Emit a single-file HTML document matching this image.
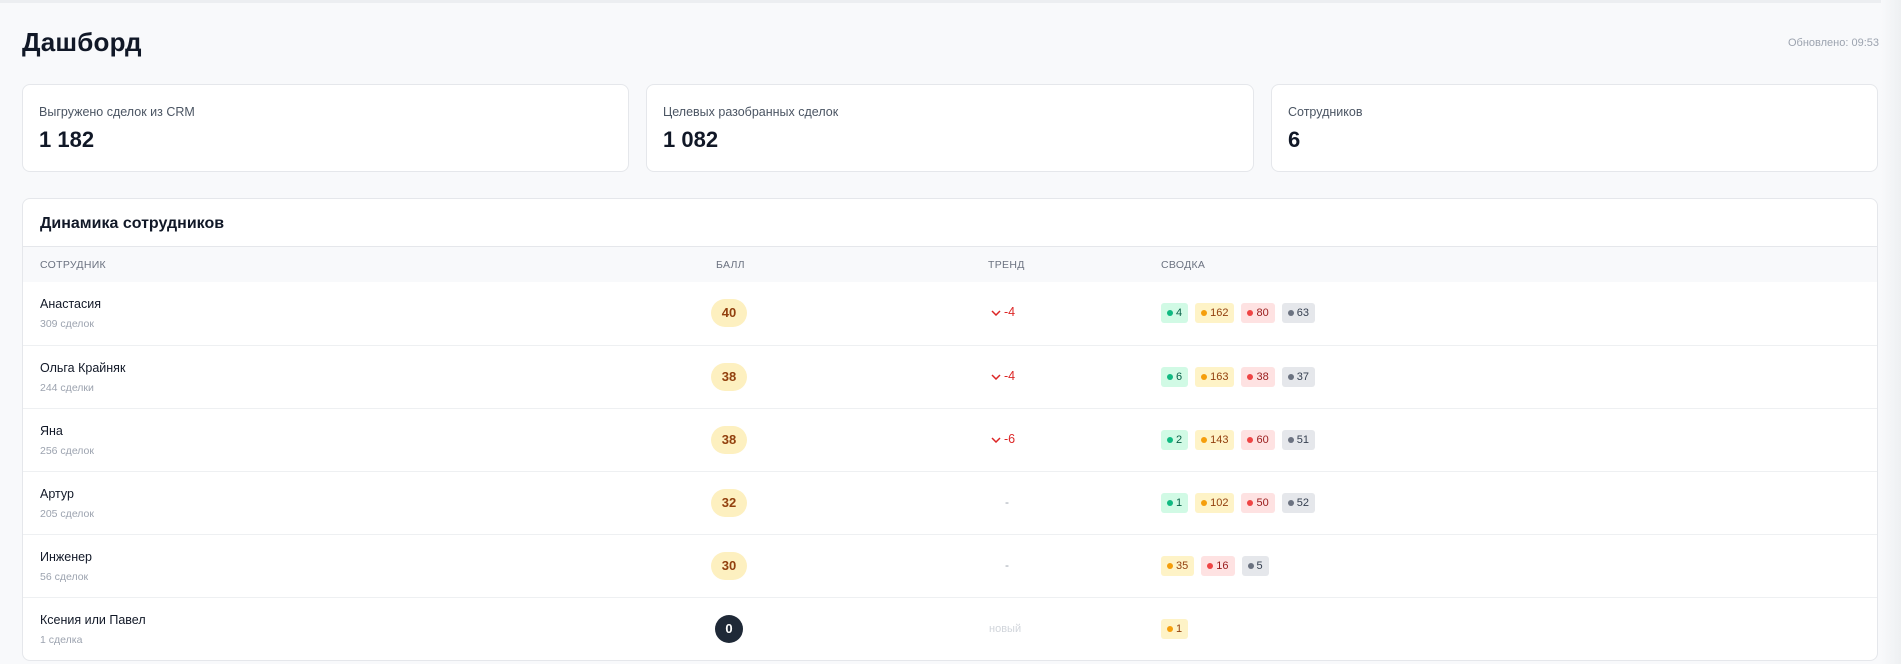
<!DOCTYPE html>
<html><head><meta charset="utf-8"><style>
*{box-sizing:border-box;margin:0;padding:0}
body{width:1901px;height:664px;overflow:hidden;background:#f8f9fb;font-family:"Liberation Sans",sans-serif;color:#111827;position:relative}
.topline{position:absolute;left:0;top:0;width:1901px;height:3px;background:#eceef1}
.sb{position:absolute;right:0;top:0;width:20px;height:664px;background:linear-gradient(90deg,#f8f9fb,#eef0f2)}
h1{position:absolute;left:22px;top:27px;font-size:26px;font-weight:700;color:#111827;letter-spacing:0.2px}
.upd{position:absolute;right:22px;top:37px;font-size:11px;color:#9ca3af}
.card{position:absolute;top:84px;height:88px;background:#fff;border:1px solid #e5e7eb;border-radius:8px}
.card .l{position:absolute;left:16px;top:20px;font-size:12.5px;color:#4b5563}
.card .v{position:absolute;left:16px;top:42px;font-size:22px;font-weight:700;color:#111827}
.panel{position:absolute;left:22px;top:198px;width:1856px;height:463px;background:#fff;border:1px solid #e5e7eb;border-radius:8px;overflow:hidden}
.pt{position:absolute;left:17px;top:16px;font-size:16px;font-weight:700}
.hd{position:absolute;left:0;top:47px;width:100%;height:36px;background:#f8f9fb;border-top:1px solid #e5e7eb}
.hd span{position:absolute;top:12px;font-size:10.5px;color:#6b7280;letter-spacing:0.3px}
.row{position:absolute;left:0;width:100%;height:63px;border-top:1px solid #eef0f2}
.nm{position:absolute;left:17px;top:15px;font-size:12.5px;color:#111827}
.sub{position:absolute;left:17px;top:36px;font-size:10.5px;color:#9ca3af}
.sc{position:absolute;left:688px;top:17px;width:36px;height:28px;border-radius:14px;background:#fdf0c0;color:#92400e;font-weight:700;font-size:13px;text-align:center;line-height:28px}
.sc.d{background:#1f2937;color:#fff;width:28px;left:692px}
.tr{position:absolute;left:968px;top:23px;font-size:12.5px;color:#dc2626}
.tr svg{vertical-align:middle;margin-right:3px}
.dash{position:absolute;left:982px;top:23px;font-size:12px;color:#9ca3af}
.new{position:absolute;left:966px;top:25px;font-size:11px;color:#d1d5db}
.bd{position:absolute;left:1138px;top:21px;display:flex;gap:7px}
.b{height:20px;padding:0 6px;border-radius:3px;font-size:11px;line-height:20px;display:flex;align-items:center}
.b i{display:inline-block;width:6px;height:6px;border-radius:50%;margin-right:3px}
.g{background:#d1fae5;color:#065f46}.g i{background:#10b981}
.y{background:#fef3c7;color:#92400e}.y i{background:#f59e0b}
.r{background:#fee2e2;color:#991b1b}.r i{background:#ef4444}
.k{background:#e5e7eb;color:#374151}.k i{background:#6b7280}
</style></head><body>
<div class="topline"></div><div class="sb"></div>
<h1>Дашборд</h1>
<div class="upd">Обновлено: 09:53</div>
<div class="card" style="left:22px;width:607px"><div class="l">Выгружено сделок из CRM</div><div class="v">1 182</div></div>
<div class="card" style="left:646px;width:608px"><div class="l">Целевых разобранных сделок</div><div class="v">1 082</div></div>
<div class="card" style="left:1271px;width:607px"><div class="l">Сотрудников</div><div class="v">6</div></div>
<div class="panel">
<div class="pt">Динамика сотрудников</div>
<div class="hd"><span style="left:17px">СОТРУДНИК</span><span style="left:693px">БАЛЛ</span><span style="left:965px">ТРЕНД</span><span style="left:1138px">СВОДКА</span></div>
<div class="row" style="top:83px;border-top:none"><div class="nm">Анастасия</div><div class="sub">309 сделок</div><div class="sc">40</div><div class="tr"><svg width="10" height="6" viewBox="0 0 10 6"><path d="M1 1l4 4 4-4" fill="none" stroke="#dc2626" stroke-width="1.5"/></svg>-4</div><div class="bd"><div class="b g"><i></i>4</div><div class="b y"><i></i>162</div><div class="b r"><i></i>80</div><div class="b k"><i></i>63</div></div></div>
<div class="row" style="top:146px"><div class="nm">Ольга Крайняк</div><div class="sub">244 сделки</div><div class="sc">38</div><div class="tr"><svg width="10" height="6" viewBox="0 0 10 6"><path d="M1 1l4 4 4-4" fill="none" stroke="#dc2626" stroke-width="1.5"/></svg>-4</div><div class="bd"><div class="b g"><i></i>6</div><div class="b y"><i></i>163</div><div class="b r"><i></i>38</div><div class="b k"><i></i>37</div></div></div>
<div class="row" style="top:209px"><div class="nm">Яна</div><div class="sub">256 сделок</div><div class="sc">38</div><div class="tr"><svg width="10" height="6" viewBox="0 0 10 6"><path d="M1 1l4 4 4-4" fill="none" stroke="#dc2626" stroke-width="1.5"/></svg>-6</div><div class="bd"><div class="b g"><i></i>2</div><div class="b y"><i></i>143</div><div class="b r"><i></i>60</div><div class="b k"><i></i>51</div></div></div>
<div class="row" style="top:272px"><div class="nm">Артур</div><div class="sub">205 сделок</div><div class="sc">32</div><div class="dash">-</div><div class="bd"><div class="b g"><i></i>1</div><div class="b y"><i></i>102</div><div class="b r"><i></i>50</div><div class="b k"><i></i>52</div></div></div>
<div class="row" style="top:335px"><div class="nm">Инженер</div><div class="sub">56 сделок</div><div class="sc">30</div><div class="dash">-</div><div class="bd"><div class="b y"><i></i>35</div><div class="b r"><i></i>16</div><div class="b k"><i></i>5</div></div></div>
<div class="row" style="top:398px"><div class="nm">Ксения или Павел</div><div class="sub">1 сделка</div><div class="sc d">0</div><div class="new">новый</div><div class="bd"><div class="b y"><i></i>1</div></div></div>
</div>
</body></html>
